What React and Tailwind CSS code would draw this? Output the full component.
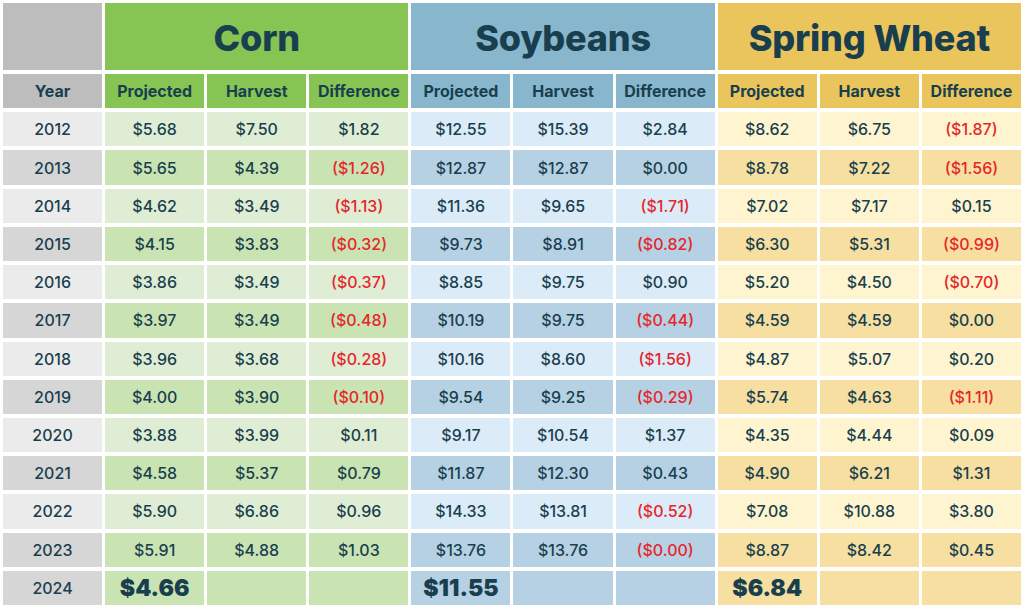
import React from 'react';

const rows = [
    ['2012', ['$5.68', '$7.50', '$1.82'], ['$12.55', '$15.39', '$2.84'], ['$8.62', '$6.75', '($1.87)']],
    ['2013', ['$5.65', '$4.39', '($1.26)'], ['$12.87', '$12.87', '$0.00'], ['$8.78', '$7.22', '($1.56)']],
    ['2014', ['$4.62', '$3.49', '($1.13)'], ['$11.36', '$9.65', '($1.71)'], ['$7.02', '$7.17', '$0.15']],
    ['2015', ['$4.15', '$3.83', '($0.32)'], ['$9.73', '$8.91', '($0.82)'], ['$6.30', '$5.31', '($0.99)']],
    ['2016', ['$3.86', '$3.49', '($0.37)'], ['$8.85', '$9.75', '$0.90'], ['$5.20', '$4.50', '($0.70)']],
    ['2017', ['$3.97', '$3.49', '($0.48)'], ['$10.19', '$9.75', '($0.44)'], ['$4.59', '$4.59', '$0.00']],
    ['2018', ['$3.96', '$3.68', '($0.28)'], ['$10.16', '$8.60', '($1.56)'], ['$4.87', '$5.07', '$0.20']],
    ['2019', ['$4.00', '$3.90', '($0.10)'], ['$9.54', '$9.25', '($0.29)'], ['$5.74', '$4.63', '($1.11)']],
    ['2020', ['$3.88', '$3.99', '$0.11'], ['$9.17', '$10.54', '$1.37'], ['$4.35', '$4.44', '$0.09']],
    ['2021', ['$4.58', '$5.37', '$0.79'], ['$11.87', '$12.30', '$0.43'], ['$4.90', '$6.21', '$1.31']],
    ['2022', ['$5.90', '$6.86', '$0.96'], ['$14.33', '$13.81', '($0.52)'], ['$7.08', '$10.88', '$3.80']],
    ['2023', ['$5.91', '$4.88', '$1.03'], ['$13.76', '$13.76', '($0.00)'], ['$8.87', '$8.42', '$0.45']],
];

const crops = [
    { name: 'Corn', head: 'bg-[#86c454]', light: 'bg-[#dfedd4]', dark: 'bg-[#c9e3b3]', final: '$4.66' },
    { name: 'Soybeans', head: 'bg-[#88b6cd]', light: 'bg-[#dcebf8]', dark: 'bg-[#b6d1e3]', final: '$11.55' },
    { name: 'Spring Wheat', head: 'bg-[#eac55c]', light: 'bg-[#fef5d0]', dark: 'bg-[#f6dfa1]', final: '$6.84' },
];

const cell = 'flex items-center justify-center';

const App = () => {
    return (
        <div
            className="w-[1024px] h-[607px] bg-white px-[3px] pt-[3px] pb-[2px] grid grid-cols-10 gap-x-[3px] gap-y-[4px] grid-rows-[67px_repeat(14,minmax(0,1fr))] text-[#193f4e]"
            style={{ fontFamily: 'Inter, "Liberation Sans", sans-serif' }}
        >
            {/* title row */}
            <div className="bg-[#bdbdbd]" />
            {crops.map(c => (
                <div key={c.name} className={`${cell} col-span-3 ${c.head} text-[36px] font-extrabold tracking-[-0.2px] pt-[2px]`}>
                    {c.name}
                </div>
            ))}

            {/* sub header */}
            <div className={`${cell} bg-[#bdbdbd] text-[16px] font-bold`}>Year</div>
            {crops.map(c => (
                ['Projected', 'Harvest', 'Difference'].map(h => (
                    <div key={c.name + h} className={`${cell} ${c.head} text-[16px] font-bold`}>{h}</div>
                ))
            ))}

            {/* data */}
            {rows.map(([year, ...vals], i) => {
                const dark = i % 2 === 1;
                return (
                    <React.Fragment key={year}>
                        <div className={`${cell} text-[16px] font-medium ${dark ? 'bg-[#d6d6d6]' : 'bg-[#ebebeb]'}`}>{year}</div>
                        {crops.map((c, ci) => vals[ci].map((v, vi) => (
                            <div
                                key={`${year}-${ci}-${vi}`}
                                className={`${cell} text-[16px] font-medium ${dark ? c.dark : c.light} ${v.startsWith('(') ? 'text-[#e5262b]' : ''}`}
                            >
                                {v}
                            </div>
                        )))}
                    </React.Fragment>
                );
            })}

            {/* 2024 */}
            <div className={`${cell} text-[16px] font-medium bg-[#d6d6d6]`}>2024</div>
            {crops.map(c => (
                <React.Fragment key={c.name + '24'}>
                    <div className={`${cell} ${c.dark} text-[23px] font-black`}>{c.final}</div>
                    <div className={c.dark} />
                    <div className={c.dark} />
                </React.Fragment>
            ))}
        </div>
    );
};

export default App;
